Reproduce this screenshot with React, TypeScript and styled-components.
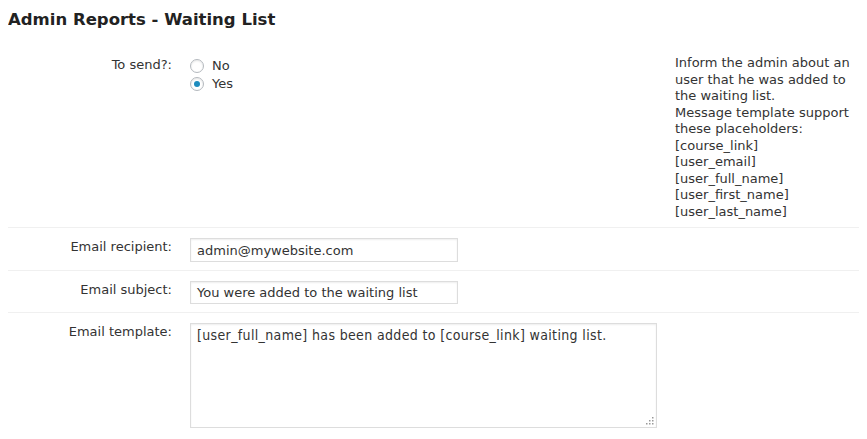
import React from "react";
import styled, { createGlobalStyle } from "styled-components";

const Global = createGlobalStyle`
  body {
    margin: 8px;
    background: #ffffff;
    font-family: "DejaVu Sans", Verdana, sans-serif;
    font-size: 13px;
    color: #333333;
  }
`;

const Title = styled.h2`
  margin: 0;
  font-size: 16.5px;
  font-weight: bold;
  color: #222222;
  line-height: 24px;
  height: 33px;
`;

const Form = styled.div`
  width: 852px;
`;

const Row = styled.div<{ $divider?: boolean; $pt?: number; $pb?: number }>`
  display: grid;
  grid-template-columns: 182px 485px 185px;
  border-top: ${(p) => (p.$divider ? "1px solid #f0f0f0" : "none")};
  padding: ${(p) => p.$pt ?? 10}px 0 ${(p) => p.$pb ?? 8}px 0;
`;

const Label = styled.div`
  text-align: right;
  padding-right: 18px;
  line-height: 17px;
  color: #333333;
`;

const Control = styled.div`
  display: flex;
  flex-direction: column;
`;

const Help = styled.div`
  line-height: 16.55px;
  white-space: nowrap;
  color: #333333;
  margin-top: -1px;
`;

const RadioLine = styled.label`
  display: flex;
  align-items: center;
  gap: 8px;
  height: 17px;
  margin-top: 1px;
  line-height: 17px;
`;

const RadioCircle = styled.span<{ $checked?: boolean }>`
  width: 14px;
  height: 14px;
  box-sizing: border-box;
  border-radius: 50%;
  border: 1px solid #b4b9be;
  background: #ffffff;
  box-shadow: inset 0 1px 2px rgba(0, 0, 0, 0.1);
  display: flex;
  align-items: center;
  justify-content: center;
  &::after {
    content: "";
    display: ${(p) => (p.$checked ? "block" : "none")};
    width: 6px;
    height: 6px;
    border-radius: 50%;
    background: #1e8cbe;
  }
`;

const TextInput = styled.div<{ $h: number }>`
  width: 268px;
  height: ${(p) => p.$h}px;
  box-sizing: border-box;
  border: 1px solid #dddddd;
  box-shadow: inset 0 1px 2px rgba(0, 0, 0, 0.07);
  padding: 0 6px;
  display: flex;
  align-items: center;
  color: #333333;
  white-space: nowrap;
`;

const AreaWrap = styled.div`
  position: relative;
  width: 467px;
  height: 105px;
`;

const Area = styled.div`
  width: 100%;
  height: 100%;
  box-sizing: border-box;
  border: 1px solid #dddddd;
  box-shadow: inset 0 1px 2px rgba(0, 0, 0, 0.07);
  padding: 3px 6px;
  font-family: "DejaVu Sans Condensed", "DejaVu Sans", sans-serif;
  font-size: 14px;
  letter-spacing: 0.35px;
  line-height: 17px;
  color: #333333;
  white-space: nowrap;
`;

const Grip = styled.svg`
  position: absolute;
  right: 3px;
  bottom: 3px;
`;

export default function App() {
  return (
    <>
      <Global />
      <Title>Admin Reports - Waiting List</Title>
      <Form>
        <Row $pt={15} $pb={7}>
          <Label>To send?:</Label>
          <Control>
            <RadioLine>
              <RadioCircle />
              No
            </RadioLine>
            <RadioLine>
              <RadioCircle $checked />
              Yes
            </RadioLine>
          </Control>
          <Help>
            Inform the admin about an
            <br />
            user that he was added to
            <br />
            the waiting list.
            <br />
            Message template support
            <br />
            these placeholders:
            <br />
            [course_link]
            <br />
            [user_email]
            <br />
            [user_full_name]
            <br />
            [user_first_name]
            <br />
            [user_last_name]
          </Help>
        </Row>
        <Row $divider>
          <Label>Email recipient:</Label>
          <Control>
            <TextInput $h={24}>admin@mywebsite.com</TextInput>
          </Control>
        </Row>
        <Row $divider>
          <Label>Email subject:</Label>
          <Control>
            <TextInput $h={23}>You were added to the waiting list</TextInput>
          </Control>
        </Row>
        <Row $divider>
          <Label>Email template:</Label>
          <Control>
            <AreaWrap>
              <Area>
                [user_full_name] has been added to [course_link] waiting list.
              </Area>
              <Grip width="8" height="8" viewBox="0 0 8 8">
                <rect x="6" y="0" width="1.5" height="1.5" fill="#999" />
                <rect x="3" y="3" width="1.5" height="1.5" fill="#999" />
                <rect x="6" y="3" width="1.5" height="1.5" fill="#999" />
                <rect x="0" y="6" width="1.5" height="1.5" fill="#999" />
                <rect x="3" y="6" width="1.5" height="1.5" fill="#999" />
                <rect x="6" y="6" width="1.5" height="1.5" fill="#999" />
              </Grip>
            </AreaWrap>
          </Control>
        </Row>
      </Form>
    </>
  );
}
